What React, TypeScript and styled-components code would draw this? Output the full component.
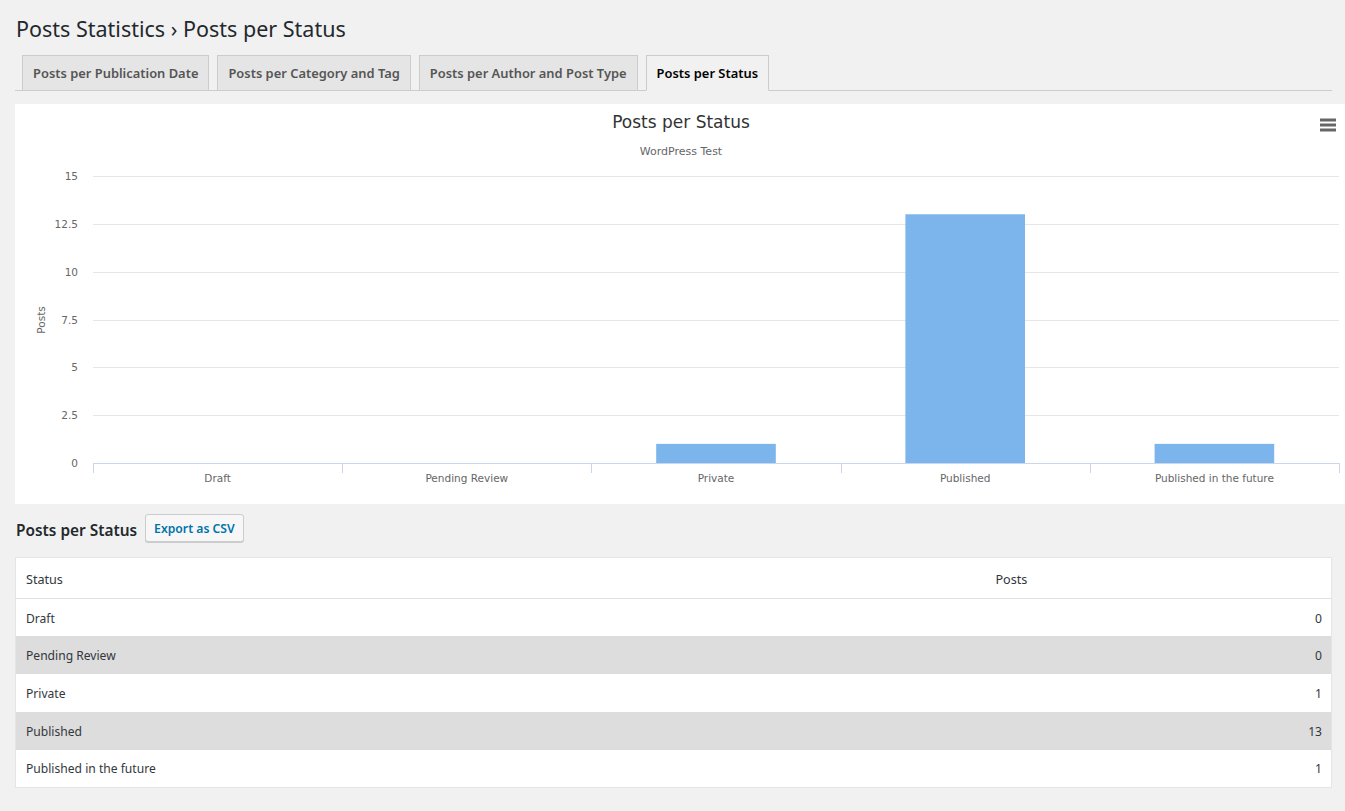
import React from "react";
import styled, { createGlobalStyle } from "styled-components";

const Global = createGlobalStyle`
  html, body { margin: 0; padding: 0; background: #f1f1f1; }
  body { font-family: "Noto Sans", "Open Sans", sans-serif; color: #23282d; overflow: hidden; }
  * { box-sizing: border-box; }
`;

const Wrap = styled.div`
  padding: 0 13px 0 15px;
  width: 1345px;
`;

const PageTitle = styled.h1`
  margin: 0;
  padding: 14px 0 0 1px;
  font-size: 21.5px;
  font-weight: 400;
  line-height: 30px;
  color: #23282d;
`;

const TabBar = styled.nav`
  display: flex;
  gap: 8px;
  margin-top: 11px;
  padding-left: 7px;
  border-bottom: 1px solid #ccc;
  height: 36px;
`;

const Tab = styled.a<{ $active?: boolean }>`
  display: flex;
  align-items: center;
  padding: 0 10px;
  height: 36px;
  border: 1px solid #ccc;
  border-bottom-color: ${(p) => (p.$active ? "#f1f1f1" : "#ccc")};
  background: ${(p) => (p.$active ? "#f1f1f1" : "#e5e5e5")};
  color: ${(p) => (p.$active ? "#000" : "#555")};
  font-size: 12.9px;
  font-weight: 600;
  white-space: nowrap;
  margin-bottom: -1px;
`;

const ChartPanel = styled.div`
  margin-top: 13px;
  margin-right: -13px;
  background: #fff;
  height: 400px;
`;

const SectionHead = styled.div`
  display: flex;
  align-items: center;
  gap: 8px;
  margin-top: 10px;
  height: 28px;
`;

const SectionTitle = styled.h2`
  margin: 0;
  padding-left: 1px;
  font-size: 15.4px;
  font-weight: 600;
  color: #23282d;
  position: relative;
  top: 2px;
`;

const Button = styled.button`
  height: 28px;
  padding: 0 8px;
  border: 1px solid #ccc;
  border-radius: 3px;
  background: #f7f7f7;
  color: #0073aa;
  font-family: inherit;
  font-size: 12.2px;
  font-weight: 600;
  box-shadow: 0 1px 0 #ccc;
`;

const Table = styled.table`
  margin-top: 15px;
  width: 100%;
  border-collapse: collapse;
  background: #fff;
  border: 1px solid #e5e5e5;
  box-shadow: 0 1px 1px rgba(0, 0, 0, 0.04);
  font-size: 12.1px;
  color: #32373c;
`;

const Th = styled.th<{ $w?: string }>`
  text-align: left;
  font-weight: 400;
  font-size: 12.6px;
  padding: 2px 10px 0;
  height: 41px;
  border-bottom: 1px solid #e1e1e1;
  color: #32373c;
  width: ${(p) => p.$w || "auto"};
`;

const Tr = styled.tr<{ $alt?: boolean }>`
  background: ${(p) => (p.$alt ? "#dddddd" : "#fff")};
  height: 37.8px;
`;

const Td = styled.td<{ $num?: boolean }>`
  padding: 1px 9px 0 10px;
  text-align: ${(p) => (p.$num ? "right" : "left")};
`;

const categories = ["Draft", "Pending Review", "Private", "Published", "Published in the future"];
const values = [0, 0, 1, 13, 1];

const Chart: React.FC = () => {
  const W = 1330;
  const left = 78;
  const right = 1324;
  const top = 72;
  const bottom = 359;
  const catW = (right - left) / 5;
  const scale = (bottom - top) / 15;
  const ticks = [0, 2.5, 5, 7.5, 10, 12.5, 15];
  const font = '"DejaVu Sans", "Lucida Grande", sans-serif';
  return (
    <svg width={W} height={400} style={{ display: "block" }} fontFamily={font}>
      <text x={666} y={24} textAnchor="middle" fontSize={17} fill="#333">
        Posts per Status
      </text>
      <text x={666} y={51} textAnchor="middle" fontSize={11} fill="#666">
        WordPress Test
      </text>
      <g stroke="#666" strokeWidth={3} strokeLinecap="butt">
        <line x1={1305} x2={1321} y1={16} y2={16} />
        <line x1={1305} x2={1321} y1={21} y2={21} />
        <line x1={1305} x2={1321} y1={26} y2={26} />
      </g>
      {ticks.map((t) => {
        const y = Math.round(bottom - t * scale) + 0.5;
        return (
          <g key={t}>
            {t !== 0 && <line x1={left} x2={right} y1={y} y2={y} stroke="#e6e6e6" />}
            <text x={63} y={y + 3} textAnchor="end" fontSize={10.5} fill="#666">
              {t}
            </text>
          </g>
        );
      })}
      <text
        x={0}
        y={0}
        transform={`translate(30 ${216}) rotate(-90)`}
        textAnchor="middle"
        fontSize={10.5}
        fill="#666"
      >
        Posts
      </text>
      {values.map((v, i) => {
        const x = left + i * catW + catW * 0.2 + catW * 0.6 * 0.1;
        const w = catW * 0.6 * 0.8;
        const h = v * scale;
        return v > 0 ? <rect key={i} x={x} y={bottom - h} width={w} height={h} fill="#7cb5ec" /> : null;
      })}
      <line x1={left} x2={right} y1={bottom + 0.5} y2={bottom + 0.5} stroke="#ccd6eb" />
      {[0, 1, 2, 3, 4, 5].map((i) => {
        const x = Math.round(left + i * catW) + 0.5;
        return <line key={i} x1={x} x2={x} y1={bottom} y2={bottom + 10} stroke="#ccd6eb" />;
      })}
      {categories.map((c, i) => (
        <text
          key={c}
          x={left + i * catW + catW / 2}
          y={378}
          textAnchor="middle"
          fontSize={10.5}
          fill="#666"
        >
          {c}
        </text>
      ))}
    </svg>
  );
};

export default function App() {
  return (
    <>
      <Global />
      <Wrap>
        <PageTitle>Posts Statistics › Posts per Status</PageTitle>
        <TabBar>
          <Tab>Posts per Publication Date</Tab>
          <Tab>Posts per Category and Tag</Tab>
          <Tab>Posts per Author and Post Type</Tab>
          <Tab $active>Posts per Status</Tab>
        </TabBar>
        <ChartPanel>
          <Chart />
        </ChartPanel>
        <SectionHead>
          <SectionTitle>Posts per Status</SectionTitle>
          <Button>Export as CSV</Button>
        </SectionHead>
        <Table>
          <thead>
            <tr>
              <Th $w="970px">Status</Th>
              <Th>Posts</Th>
            </tr>
          </thead>
          <tbody>
            {categories.map((c, i) => (
              <Tr key={c} $alt={i % 2 === 1}>
                <Td>{c}</Td>
                <Td $num>{values[i]}</Td>
              </Tr>
            ))}
          </tbody>
        </Table>
      </Wrap>
    </>
  );
}
